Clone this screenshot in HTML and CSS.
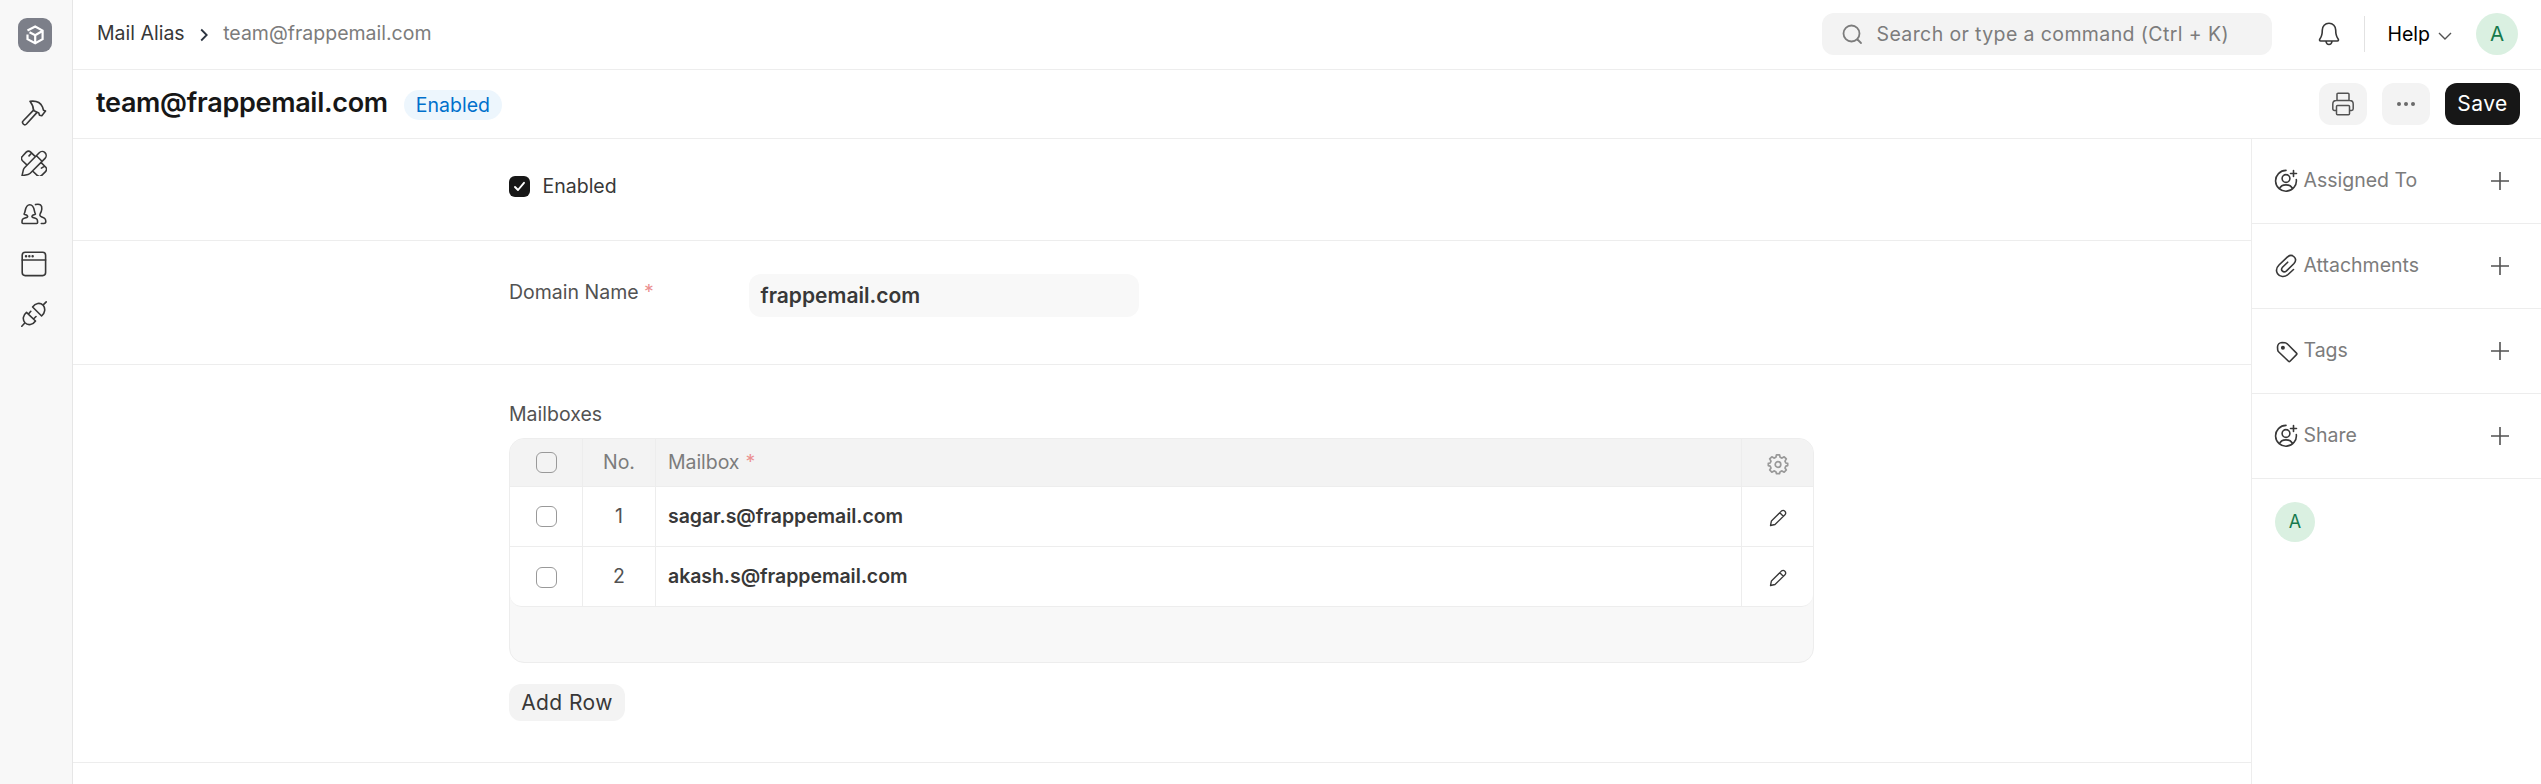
FILE: index.html
```html
<!DOCTYPE html>
<html lang="en">
<head>
<meta charset="utf-8">
<title>team@frappemail.com</title>
<link rel="stylesheet" href="styles.css">
</head>
<body>
<aside class="dock">
  <div class="logo">
    <svg width="34" height="34" viewBox="0 0 34 34" fill="none" stroke="#fff" stroke-width="2.2"><path d="M9.500 12.600 17.200 8.600 24.600 12.600V21.200L17.200 25.300 9.500 21.200V16.500"/><path d="M11.500 14.300 17.200 17.200 24 13.200M17.200 17.200V24.500"/></svg>
  </div>
  <nav class="dock-nav">
    <svg class="ico" viewBox="0 0 26 26"><path d="M9 1.300C15 .5 19.500 2.500 21.500 7l1 3.300 2 .8-3.700 4.600-2.300-.5-.7-2.300-5.300-2.300C12.500 7.500 11.500 4.500 9 1.300ZM12.800 9.900 2.300 20.700a2.200 2.200 0 0 0 3.200 3.300L15.800 12.600"/></svg>
    <svg class="ico" viewBox="0 -0.700 26.500 26.500"><path d="M6.200 14.700 1.500 10.200a3.300 3.300 0 0 1 0-4.600L5.300 1.500a3.300 3.300 0 0 1 4.600 0L14.600 6M20.300 11.900 25 16.700a3.300 3.300 0 0 1 0 4.600L21.100 25.200a3.300 3.300 0 0 1-4.600 0L11.800 20.700M10.400 2.800 8.200 5.300M24.200 15.800l-3.400 2M1 25.600 2.400 19.600Q2.700 18.300 3.600 17.400L18.600 2.100A4.100 4.100 0 0 1 24.500 7.800L9.400 23Q8.500 23.900 7.200 24.200ZM15.700 5.200 21.400 10.800"/></svg>
    <svg class="ico" viewBox="0 0 26 26"><path d="M2 22.500c-.7 0-1-.3-1-1 0-3 .3-3.700 3-4.500 2.500-.7 3.500-1.200 2-2.700-1-.7-2.700-.5-3-1.300C4.800 11.500 3.500 3.800 8.800 3.800s4 7.700 5.700 9.200c-.3.800-2 .6-2.900 1.300-1.500 1.500-.5 2 2 2.700 2.600.8 3 1.500 3 4.500 0 .7-.3 1-1 1ZM14.500 3.600c4.500-1.300 6.700.8 6.300 4.400-.2 2-.5 3-1.500 4.500-.8 1.600-.6 2.500 1.500 3.500 3 1.300 4 1.700 4 4.500 0 1.500-.5 2-2 2h-2.500"/></svg>
    <svg class="ico" viewBox="0 0 26 26"><rect x="1.200" y="1.200" width="23.400" height="23.400" rx="3"/><path d="M1.200 9h23.400"/><path class="dots" d="M5 5.200h.1M8.300 5.200h.1M11.600 5.200h.1"/></svg>
    <svg class="ico" viewBox="0 0 26 26"><path d="M.8 25.200l3.200-3.400M4 21.800c-2.800-3-2-7.700 1.500-10.500L14.500 20C11.800 24 7 24.800 4 21.800ZM7.500 13l2.300-2.700M12.500 18l2.500-2.500M25.200.9 22 4.100M22 4.100c2.700 3.200 2.200 7.700-1.400 10.900L11.600 6C14.500 2 19 1.300 22 4.100Z"/></svg>
  </nav>
</aside>
<div class="app">
  <header class="navbar">
    <div class="crumbs"><span class="crumb-link">Mail Alias</span>
      <svg width="8" height="14" viewBox="0 0 8 14" fill="none" stroke="#2b3440" stroke-width="1.800"><path d="M1.200 1.500 6.700 7 1.200 12.500"/></svg>
      <span class="crumb-cur">team@frappemail.com</span></div>
    <div class="nav-right">
      <div class="search">
        <svg width="21" height="21" viewBox="0 0 21 21" fill="none" stroke="#7c7c7c" stroke-width="1.800" stroke-linecap="round"><circle cx="9.500" cy="9.500" r="8"/><path d="m15.500 15.500 3.500 3.500"/></svg>
        <span>Search or type a command (Ctrl + K)</span>
      </div>
      <svg class="bell" width="22" height="24" viewBox="0 0 22 24" fill="none" stroke="#383838" stroke-width="1.600"><path d="M11 1.300C7 1.300 4.300 4.200 4.300 8c0 5-.6 6.500-2.300 8.700-.9 1.300-.5 2.300.7 2.300h16.600c1.200 0 1.600-1 .7-2.300C18.300 14.500 17.700 13 17.700 8c0-3.800-2.700-6.700-6.700-6.700ZM8 19.500c.3 1.900 1.400 3 3 3s2.700-1.100 3-3"/></svg>
      <i class="vr"></i>
      <span class="help">Help</span>
      <svg class="caret" width="14" height="8" viewBox="0 0 14 8" fill="none" stroke="#525252" stroke-width="1.400"><path d="m1 1 6 6 6-6"/></svg>
      <span class="avatar">A</span>
    </div>
  </header>
  <section class="page-head">
    <h1>team@frappemail.com</h1>
    <span class="pill">Enabled</span>
    <div class="actions">
      <button class="btn square"><svg width="24" height="24" viewBox="0 0 24 24" fill="none" stroke="#525252" stroke-width="1.500"><path d="M6 8.500V2.200c0-.6.400-1 1-1h10c.6 0 1 .4 1 1v6.300M5.500 18.500H3.500c-1 0-1.700-.7-1.700-1.700V12c0-2 1.500-3.500 3.500-3.500h13.400c2 0 3.500 1.500 3.500 3.500v4.800c0 1-.7 1.700-1.700 1.700h-2"/><path d="M6.500 13.500h11c.6 0 1 .4 1 1v7.300c0 .6-.4 1-1 1h-11c-.6 0-1-.4-1-1v-7.300c0-.6.400-1 1-1Z"/></svg></button>
      <button class="btn square"><svg width="20" height="6" viewBox="0 0 20 6" fill="#6a6a6a"><circle cx="3" cy="3" r="2"/><circle cx="10" cy="3" r="2"/><circle cx="17" cy="3" r="2"/></svg></button>
      <button class="btn save">Save</button>
    </div>
  </section>
  <div class="body">
    <main class="form">
      <section class="sec sec-enabled">
        <span class="check on"><svg width="21" height="21" viewBox="0 0 21 21" fill="none" stroke="#fff" stroke-width="1.900" stroke-linecap="round" stroke-linejoin="round"><path d="m6 11 3 3 6-7.200"/></svg></span>
        <span class="check-label">Enabled</span>
      </section>
      <section class="sec sec-domain">
        <label class="label">Domain Name <b class="req">*</b></label>
        <div class="input">frappemail.com</div>
      </section>
      <section class="sec sec-boxes">
        <label class="label">Mailboxes</label>
        <div class="grid">
          <div class="row head"><div class="c"><span class="check"></span></div><div class="c no">No.</div><div class="c main">Mailbox <b class="req">*</b></div><div class="c">
            <svg class="gear" width="22" height="22" viewBox="0 0 22 22" fill="none" stroke="#999" stroke-width="1.700" stroke-linejoin="round"><path d="M9.500 1.800h3l.6 2.500 1.900.8 2.200-1.300 2.100 2.100L18 8.100l.8 1.900 1.900.4v2.200l-1.900.5L18 15l1.300 2-2.100 2.200-2.200-1.300-1.900.8-.6 2h-3l-.6-2-1.900-.8-2.200 1.300L2.700 17 4 15l-.8-1.900-1.900-.5v-2.200l1.900-.4.8-1.900-1.300-2.200 2.100-2.100L7 5.100l1.900-.8Z"/><circle cx="11" cy="11.500" r="2.800"/></svg></div></div>
          <div class="rows">
            <div class="row"><div class="c"><span class="check"></span></div><div class="c no">1</div><div class="c main">sagar.s@frappemail.com</div><div class="c"><svg class="pen" viewBox="0 0 18 18"><path d="M1.500 16.500 2.400 12 12.600 1.900a2.600 2.600 0 0 1 3.600 3.600L6 15.500ZM10.800 3.700l3.500 3.500"/></svg></div></div>
            <div class="row"><div class="c"><span class="check low"></span></div><div class="c no">2</div><div class="c main">akash.s@frappemail.com</div><div class="c"><svg class="pen" viewBox="0 0 18 18"><path d="M1.500 16.500 2.400 12 12.600 1.900a2.600 2.600 0 0 1 3.600 3.600L6 15.500ZM10.800 3.700l3.500 3.500"/></svg></div></div>
          </div>
        </div>
        <button class="btn add">Add Row</button>
      </section>
    </main>
    <aside class="side">
      <div class="item"><svg class="sico" viewBox="0 0 24 24"><path d="M12 1.400A10.400 10.400 0 1 0 22.300 10.500M5.500 19.800c2-5.200 11-5.200 13 0M19.500 1.500v6M16.500 4.500h6"/><circle cx="12" cy="9.500" r="3.900"/></svg><span>Assigned To</span><svg class="plus" viewBox="0 0 18 18"><path d="M9 0v18M0 9h18"/></svg></div>
      <div class="item"><svg class="sico" viewBox="0 0 24 24"><path d="M19.500 15.500 14.600 20c-4 4-9 2.800-11-.2-1.700-2.800-1.200-6.200 1.400-8.800L13 3.300c5-4.600 11.300 1 7 6.200l-7.500 7.300c-3 2.700-6.500-.5-4-3.500l5.200-5.100"/></svg><span>Attachments</span><svg class="plus" viewBox="0 0 18 18"><path d="M9 0v18M0 9h18"/></svg></div>
      <div class="item"><svg class="sico" viewBox="-0.500 -0.500 24 24"><path d="M3 7.500A4.700 4.700 0 0 1 7.500 3l3 .3c.9.100 1.500.4 2.200 1L22 13.600c.5.500.5 1 0 1.500l-6.500 6.700c-.5.500-1 .5-1.500 0L4.300 12.500c-.6-.6-1-1.400-1.100-2.200Z"/><circle cx="8.400" cy="8.200" r="1.200" fill="#383838"/></svg><span>Tags</span><svg class="plus" viewBox="0 0 18 18"><path d="M9 0v18M0 9h18"/></svg></div>
      <div class="item"><svg class="sico" viewBox="0 0 24 24"><path d="M12 1.400A10.400 10.400 0 1 0 22.300 10.500M5.500 19.800c2-5.200 11-5.200 13 0M19.500 1.500v6M16.500 4.500h6"/><circle cx="12" cy="9.500" r="3.900"/></svg><span>Share</span><svg class="plus" viewBox="0 0 18 18"><path d="M9 0v18M0 9h18"/></svg></div>
      <div class="who"><span class="avatar small">A</span></div>
    </aside>
  </div>
</div>
</body>
</html>
```
FILE: styles.css
```css
* { box-sizing: border-box; }
body { margin: 0; height: 784px; display: flex; overflow: hidden; background: #fff; font: 400 19.5px/24px Inter, "Liberation Sans", sans-serif; color: #383838; }
svg { display: block; flex: none; }
button { border: 0; font: inherit; color: inherit; padding: 0; }
.dock { width: 73px; background: #f8f8f8; border-right: 1px solid #e6e6e6; padding: 18px 0 0 18px; flex: none; }
.logo { width: 34px; height: 34px; border-radius: 9px; background: #7c7f89; }
.dock-nav { margin: 48px 0 0 3px; display: flex; flex-direction: column; gap: 24.300px; }
.ico { width: 26px; height: 26px; fill: none; stroke: #383838; stroke-width: 1.600; stroke-linejoin: round; stroke-linecap: round; }
.dots { stroke-width: 2.400; }
.app { flex: 1; display: flex; flex-direction: column; min-width: 0; }
.navbar { height: 70px; border-bottom: 1px solid #ededed; display: flex; align-items: center; justify-content: space-between; padding: 0 23px 1px 24px; }
.crumbs { display: flex; align-items: center; padding-bottom: 2px; }
.crumbs svg { margin: 3px 15px 0 15.500px; }
.crumb-cur { color: #7c7c7c; }
.nav-right { display: flex; align-items: center; }
.search { width: 450px; height: 42px; border-radius: 12px; background: #f3f3f3; color: #7c7c7c; display: flex; align-items: center; padding-left: 20px; gap: 13.500px; margin-right: 46px; letter-spacing: 0.02em; }
.vr { width: 1px; height: 36px; background: #e2e2e2; margin: 0 22.500px 0 24px; }
.help { width: 42.500px; color: #000; }
.caret { margin: 3px 24px 0 8px; }
.avatar { width: 42px; height: 42px; border-radius: 50%; background: #daf0e1; color: #16794c; display: flex; align-items: center; justify-content: center; font-size: 20.500px; }
.avatar.small { width: 40px; height: 40px; font-size: 18px; }
.page-head { height: 69px; border-bottom: 1px solid #ededed; display: flex; align-items: center; padding: 0 21px 0 23px; }
h1 { margin: 0 0 2px; font-size: 27px; font-weight: 600; line-height: 34px; letter-spacing: -0.011em; color: #171717; }
.pill { height: 30px; border-radius: 15px; margin: 2px 0 0 16px; padding: 0 12px; line-height: 30px; background: #edf6fd; color: #0070cc; }
.actions { margin-left: auto; display: flex; gap: 15px; }
.btn { background: #f3f3f3; border-radius: 12px; height: 42px; font-size: 21px; letter-spacing: 0.02em; display: flex; align-items: center; justify-content: center; }
.square { width: 48px; }
.save { width: 75px; background: #171717; color: #fff; }
.body { flex: 1; display: flex; }
.form { flex: 1; }
.sec { border-bottom: 1px solid #ededed; padding-left: 436px; }
.sec-enabled { height: 102px; display: flex; padding-top: 37px; }
.check { width: 21px; height: 21px; border: 1px solid #999; border-radius: 6px; background: #fff; display: block; }
.head .check { background: transparent; }
.check.low { margin-top: 2px; }
.check.on { border: 0; background: #171717; }
.check-label { margin-left: 12.500px; margin-top: -2px; }
.sec-domain { height: 124px; display: flex; padding-top: 33px; }
.label { color: #525252; }
.sec-domain .label { width: 240px; margin-top: 6px; }
.req { color: #eb9091; font-weight: 400; }
.input { width: 390px; height: 43px; border-radius: 12px; background: #f8f8f8; padding-left: 11.500px; font-size: 21px; line-height: 44px; font-weight: 600; }
.sec-boxes { height: 398px; padding-top: 37px; }
.sec-boxes .label { display: block; height: 36px; line-height: 24px; }
.grid { width: 1305px; height: 225px; border: 1px solid #ededed; border-radius: 15px; background: #f8f8f8; overflow: hidden; }
.row { display: grid; grid-template-columns: 73px 73px 1086px 1fr; height: 60px; border-bottom: 1px solid #ededed; }
.row.head { height: 48px; background: #f3f3f3; color: #7c7c7c; }
.c { display: flex; align-items: center; justify-content: center; border-right: 1px solid #ededed; }
.c:last-child { border-right: 0; }
.no { color: #525252; }
.head .no { color: #7c7c7c; }
.main { justify-content: flex-start; padding-left: 12px; font-weight: 600; gap: 6px; letter-spacing: -0.003em; }
.head .main { font-weight: 400; }
.main, .no { padding-bottom: 1px; }
.rows { background: #fff; border-radius: 0 0 12px 12px; }
.rows .row:last-child { border-radius: 0 0 12px 12px; }
.gear { margin-top: 2px; }
.pen { width: 18px; height: 18px; fill: none; stroke: #383838; stroke-width: 1.300; stroke-linejoin: round; margin-top: 3px; }
.add { width: 116px; height: 37px; margin-top: 21px; }
.side { width: 290px; border-left: 1px solid #ededed; }
.item { height: 85px; border-bottom: 1px solid #ededed; display: flex; align-items: center; padding: 0 32px 0 22px; color: #7c7c7c; }
.item span { margin-bottom: 2px; }
.sico { width: 24px; height: 24px; fill: none; stroke: #383838; stroke-width: 1.600; stroke-linecap: round; margin-right: 5.500px; }
.plus { width: 18px; height: 18px; margin-left: auto; stroke: #525252; stroke-width: 1.600; }
.who { padding: 23px 0 0 23px; }
```
